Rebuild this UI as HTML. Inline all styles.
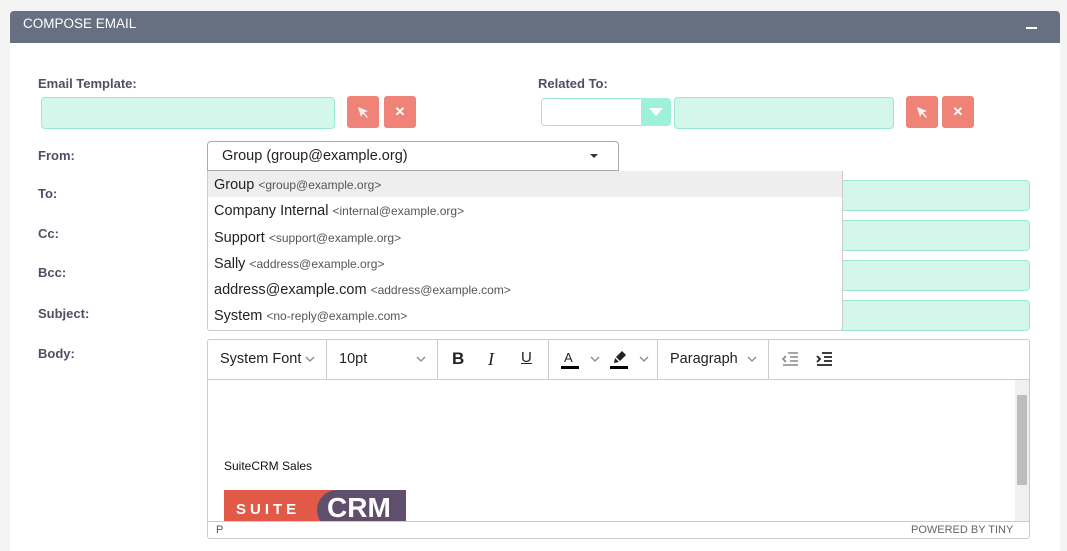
<!DOCTYPE html>
<html><head><style>
*{box-sizing:border-box;margin:0;padding:0}
body{width:1067px;height:547px;background:#f4f4f4;font-family:"Liberation Sans",sans-serif;position:relative;overflow:hidden}
.abs{position:absolute}
.panel{left:10px;top:11px;width:1050px;height:540px;background:#fff;border-radius:4px 4px 0 0}
.hdr{left:10px;top:11px;width:1050px;height:32px;background:#667080;border-radius:4px 4px 0 0;color:#fff;font-size:13.5px;padding:5px 13px}
.lbl{color:#534d64;font-weight:bold;font-size:13px}
.inp{background:#d4f7ec;border:1px solid #9ae8d2;border-radius:4px}
.btn{background:#f08377;border-radius:3px;width:32px;height:32px;color:#fff;display:flex;align-items:center;justify-content:center;font-weight:bold;font-size:13px}
.dd{left:207px;top:171px;width:636px;height:160px;border:1px solid #ccc;border-top:none;background:#fff;border-radius:0 0 3px 3px}
.dd div{height:26.3px;padding:6px 6px 4px;font-size:14.5px;color:#222}
.dd span{font-size:12px;color:#555}
.ed{left:207px;top:339px;width:823px;height:200px;border:1px solid #ccc;border-radius:3px}
.tb{font-size:14.5px;color:#222}
.sep{position:absolute;top:0;width:1px;height:39px;background:#ccc}
.chev{position:absolute;top:16px}
</style></head><body>
<div class="abs panel"></div>
<div class="abs hdr">COMPOSE EMAIL</div>
<div class="abs" style="left:1026px;top:27px;width:11px;height:2px;background:#fff"></div>

<div class="abs lbl" style="left:38px;top:76px">Email Template:</div>
<div class="abs inp" style="left:41px;top:97px;width:294px;height:32px"></div>
<div class="abs btn" style="left:347px;top:96px"><svg width="14" height="14" viewBox="0 0 14 14"><path d="M2 2L12 6L8 7.5L12 12L11 13L7 8.5L5 12Z" fill="#f4f4f4"/></svg></div>
<div class="abs btn" style="left:384px;top:96px">✕</div>

<div class="abs lbl" style="left:538px;top:76px">Related To:</div>
<div class="abs" style="left:541px;top:98px;width:130px;height:28px;border:1px solid #9ae8d2;border-radius:4px;background:#fff"></div>
<div class="abs" style="left:641px;top:98px;width:30px;height:28px;background:#9ff0d8;border-radius:0 4px 4px 0"></div>
<div class="abs" style="left:649px;top:108px;width:0;height:0;border-left:7px solid transparent;border-right:7px solid transparent;border-top:8px solid #fff"></div>
<div class="abs inp" style="left:674px;top:97px;width:220px;height:32px"></div>
<div class="abs btn" style="left:906px;top:96px"><svg width="14" height="14" viewBox="0 0 14 14"><path d="M2 2L12 6L8 7.5L12 12L11 13L7 8.5L5 12Z" fill="#f4f4f4"/></svg></div>
<div class="abs btn" style="left:942px;top:96px">✕</div>

<div class="abs lbl" style="left:38px;top:148px">From:</div>
<div class="abs" style="left:207px;top:141px;width:412px;height:30px;border:1px solid #aaa;border-radius:4px 4px 0 0;font-size:14.5px;color:#222;padding:6px 14px">Group (group@example.org)</div>
<div class="abs" style="left:590px;top:154px;border-left:4px solid transparent;border-right:4px solid transparent;border-top:4px solid #333"></div>

<div class="abs lbl" style="left:38px;top:186px">To:</div>
<div class="abs lbl" style="left:38px;top:226px">Cc:</div>
<div class="abs lbl" style="left:38px;top:265px">Bcc:</div>
<div class="abs lbl" style="left:38px;top:306px">Subject:</div>
<div class="abs lbl" style="left:38px;top:346px">Body:</div>
<div class="abs inp" style="left:820px;top:180px;width:210px;height:31px"></div>
<div class="abs inp" style="left:820px;top:220px;width:210px;height:31px"></div>
<div class="abs inp" style="left:820px;top:260px;width:210px;height:31px"></div>
<div class="abs inp" style="left:820px;top:300px;width:210px;height:31px"></div>

<div class="abs dd">
<div style="background:#eee">Group <span>&lt;group@example.org&gt;</span></div>
<div>Company Internal <span>&lt;internal@example.org&gt;</span></div>
<div>Support <span>&lt;support@example.org&gt;</span></div>
<div>Sally <span>&lt;address@example.org&gt;</span></div>
<div>address@example.com <span>&lt;address@example.com&gt;</span></div>
<div>System <span>&lt;no-reply@example.com&gt;</span></div>
</div>

<div class="abs ed">
 <div class="abs" style="left:0;top:39px;width:821px;height:1px;background:#ccc"></div>
 <div class="abs tb" style="left:12px;top:11px">System Font</div><svg class="chev" style="left:97px" width="10" height="6"><path d="M1 1L5 5L9 1" stroke="#888" fill="none" stroke-width="1.3"/></svg>
 <div class="sep" style="left:118px"></div>
 <div class="abs tb" style="left:131px;top:11px">10pt</div><svg class="chev" style="left:208px" width="10" height="6"><path d="M1 1L5 5L9 1" stroke="#888" fill="none" stroke-width="1.3"/></svg>
 <div class="sep" style="left:229px"></div>
 <div class="abs" style="left:244px;top:9px;font-weight:bold;font-size:17px;color:#222">B</div>
 <div class="abs" style="left:280px;top:9px;font-style:italic;font-family:'Liberation Serif';font-size:18px;color:#222">I</div>
 <div class="abs" style="left:313px;top:9px;font-size:15px;text-decoration:underline;color:#222">U</div>
 <div class="sep" style="left:340px"></div>
 <div class="abs" style="left:356px;top:10px;font-size:13px;color:#222">A</div>
 <div class="abs" style="left:353px;top:26px;width:18px;height:3px;background:#000"></div><svg class="chev" style="left:382px" width="10" height="6"><path d="M1 1L5 5L9 1" stroke="#888" fill="none" stroke-width="1.3"/></svg>
 <svg class="abs" style="left:404px;top:9px" width="16" height="16" viewBox="0 0 16 16"><path d="M10 2L14 6L8 12L4 8Z M3 9L7 13L2 14Z" fill="#222"/></svg>
 <div class="abs" style="left:402px;top:26px;width:18px;height:3px;background:#000"></div><svg class="chev" style="left:431px" width="10" height="6"><path d="M1 1L5 5L9 1" stroke="#888" fill="none" stroke-width="1.3"/></svg>
 <div class="sep" style="left:449px"></div>
 <div class="abs tb" style="left:462px;top:11px">Paragraph</div><svg class="chev" style="left:539px" width="10" height="6"><path d="M1 1L5 5L9 1" stroke="#888" fill="none" stroke-width="1.3"/></svg>
 <div class="sep" style="left:560px"></div>
 <svg class="abs" style="left:574px;top:12px" width="16" height="14" viewBox="0 0 16 14"><path d="M6 1h10M8 5h8M8 9h8M1 13h15M4 4L1 7L4 10" stroke="#888" stroke-width="1.6" fill="none"/></svg>
 <svg class="abs" style="left:608px;top:12px" width="16" height="14" viewBox="0 0 16 14"><path d="M6 1h10M8 5h8M8 9h8M1 13h15M1 4L4 7L1 10" stroke="#222" stroke-width="1.8" fill="none"/></svg>
 <div class="abs" style="left:16px;top:119px;font-size:12px;color:#111">SuiteCRM Sales</div>
 <div class="abs" style="left:16px;top:150px;width:182px;height:31px;background:#e05a47;overflow:hidden">
  <div class="abs" style="left:93px;top:0;width:100px;height:40px;background:#5f4f6c;border-radius:20px 0 0 20px"></div>
  <div class="abs" style="left:12px;top:11px;color:#fff;font-weight:bold;font-size:15px;letter-spacing:4px">SUITE</div>
  <div class="abs" style="left:103px;top:2px;color:#fff;font-weight:bold;font-size:28px">CRM</div>
 </div>
 <div class="abs" style="left:807px;top:40px;width:14px;height:141px;background:#f0f0f0"></div>
 <div class="abs" style="left:809px;top:55px;width:10px;height:90px;background:#bdbdbd"></div>
 <div class="abs" style="left:0;top:181px;width:821px;height:1px;background:#ccc"></div>
 <div class="abs" style="left:8px;top:184px;font-size:11px;color:#555">P</div>
 <div class="abs" style="left:703px;top:184px;font-size:11px;color:#666">POWERED BY TINY</div>
</div>
</body></html>
